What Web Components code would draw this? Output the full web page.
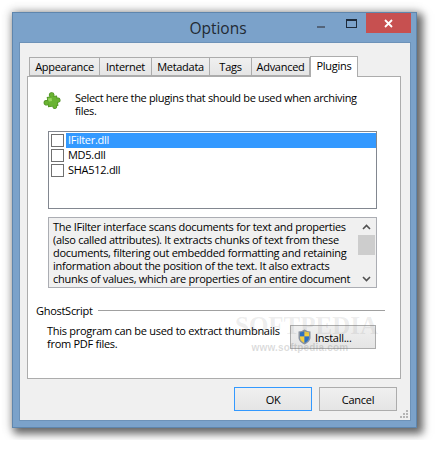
<!DOCTYPE html>
<html><head><meta charset="utf-8">
<style>
html,body{margin:0;padding:0;background:#fff}
body{padding:12px;font:11px "Open Sans","Noto Sans",sans-serif;color:#000;letter-spacing:-.28px}
</style></head><body>
<x-window title="Options">
  <x-tabs>
    <x-tab style="width:70px">Appearance</x-tab><x-tab style="width:52px">Internet</x-tab><x-tab style="width:58px">Metadata</x-tab><x-tab style="width:42px">Tags</x-tab><x-tab style="width:59px">Advanced</x-tab><x-tab active style="width:48px">Plugins</x-tab>
  </x-tabs>
  <x-panel>
    <x-intro>Select here the plugins that should be used when archiving<br>files.</x-intro>
    <x-plugin-list>
      <x-plugin selected>IFilter.dll</x-plugin>
      <x-plugin>MD5.dll</x-plugin>
      <x-plugin>SHA512.dll</x-plugin>
    </x-plugin-list>
    <x-desc>The IFilter interface scans documents for text and properties<br>(also called attributes). It extracts chunks of text from these<br>documents, filtering out embedded formatting and retaining<br>information about the position of the text. It also extracts<br>chunks of values, which are properties of an entire document</x-desc>
    <x-group label="GhostScript">
      <span>This program can be used to extract thumbnails<br>from PDF files.</span>
      <x-button shield>Install...</x-button>
    </x-group>
    <x-mark></x-mark>
  </x-panel>
  <x-footer><x-button big focus>OK</x-button><x-button big>Cancel</x-button></x-footer>
</x-window>
<script>
function def(name,css,html){
  customElements.define(name,class extends HTMLElement{
    constructor(){super();const s=this.attachShadow({mode:'open'});
      s.innerHTML='<style>'+css+'</style>'+(typeof html==='function'?html(this):html);}
  });
}
def('x-window',`
:host{display:block;width:405px;height:416px;box-sizing:border-box;background:#7ba2ca;border:1px solid #5f86ad;
  box-shadow:4px 4px 8px 2px rgba(0,0,0,.55),0 0 9px 2px rgba(0,0,0,.16);display:flex;flex-direction:column}
.bar{height:29px;flex:none;display:flex;position:relative;justify-content:center;align-items:center}
.t{font:15.5px "Open Sans","Noto Sans",sans-serif;color:#222a33;letter-spacing:0;margin:1px 0 0 7px}
.ctl{position:absolute;right:5px;top:0;display:flex;align-items:flex-start}
.min{width:8px;height:2px;background:#53647a;margin:13px 21px 0 0}
.max{width:9px;height:6px;border:1.5px solid #1d2a3a;border-top-width:2.5px;margin:6px 9px 0 0;box-sizing:content-box}
.x{width:45px;height:20px;background:#c75050;display:flex;align-items:center;justify-content:center}
.client{flex:1;margin:0 5px 6px 6px;background:#f0f0f0;border:1px solid #6d92b8;display:flex;flex-direction:column;padding:13px 0 0 7px;box-sizing:border-box;min-height:0;position:relative}
.grip{position:absolute;right:1px;bottom:1px}
`,`<div class="bar"><span class="t">Options</span><div class="ctl"><div class="min"></div><div class="max"></div><div class="x"><svg width="9" height="9" viewBox="0 0 9 9"><path d="M1 1l7 7M8 1L1 8" stroke="#fff" stroke-width="1.8"/></svg></div></div></div>
<div class="client"><slot></slot><svg class="grip" width="9" height="9" viewBox="0 0 9 9" fill="#b5b5b5"><rect x="6" y="0" width="2" height="2"/><rect x="3" y="3" width="2" height="2"/><rect x="6" y="3" width="2" height="2"/><rect x="0" y="6" width="2" height="2"/><rect x="3" y="6" width="2" height="2"/><rect x="6" y="6" width="2" height="2"/></svg></div>`);
def('x-tabs',`:host{display:flex;align-items:flex-end;height:20px;padding-left:2px;position:relative;z-index:1;flex:none;margin-right:10px}`,`<slot></slot>`);
def('x-tab',`
:host{display:block;box-sizing:border-box;height:19px;border:1px solid #acacac;border-right-width:0;background:linear-gradient(#f0f0f0,#e5e5e5);line-height:18px;white-space:nowrap;text-align:center}
:host(:nth-child(5)){border-right-width:1px}
:host([active]){height:21px;background:#fff;border-right-width:1px;border-bottom:0;line-height:18px;margin-bottom:-1px;position:relative}
`,`<slot></slot>`);
def('x-panel',`
:host{display:flex;flex-direction:column;width:374px;height:303px;box-sizing:border-box;background:#fff;border:1px solid #acacac;flex:none;position:relative;padding:0 23px 0 20px}
`,`<slot></slot>`);
def('x-intro',`
:host{display:flex;height:54px;box-sizing:border-box;padding-top:13px;margin-left:-5px;flex:none;line-height:13px}
svg{flex:none;margin:2px 14px 0 0}
div{width:320px;padding-top:1px;white-space:nowrap;letter-spacing:-.34px}
`,`<svg width="18" height="18" viewBox="0 0 18 18"><g transform="rotate(-8 9 9)"><g fill="#4f8f24" stroke="#4f8f24" stroke-width="1.400"><rect x="5" y="5" width="9" height="9"/><circle cx="9.500" cy="3" r="2.100"/><circle cx="3.200" cy="10" r="2.100"/><circle cx="15" cy="9" r="1.900"/><circle cx="11" cy="15" r="1.700"/></g><g fill="#69b332"><rect x="5" y="5" width="9" height="9"/><circle cx="9.500" cy="3" r="2.100"/><circle cx="3.200" cy="10" r="2.100"/><circle cx="15" cy="9" r="1.900"/><circle cx="11" cy="15" r="1.700"/></g><path d="M5 6h4v3H6z" fill="#97d65e"/></g></svg><div><slot></slot></div>`);
def('x-plugin-list',`
:host{display:block;height:78px;box-sizing:border-box;border:1px solid #828790;padding:1px 0 0 2px;flex:none}
`,`<slot></slot>`);
def('x-plugin',`
:host{display:flex;align-items:center;height:15px;gap:2px}
.b{width:11px;height:11px;border:1px solid #707070;background:#fff;flex:none}
.l{flex:1;height:15px;line-height:14px;padding-left:2px}
:host([selected]) .l{background:#3399ff;color:#fff}
`,`<div class="b"></div><div class="l"><slot></slot></div>`);
def('x-desc',`
:host{display:flex;height:71px;box-sizing:border-box;margin-top:8px;border:1px solid #abadb3;background:#f0f0f0;flex:none;overflow:hidden}
.txt{flex:1;padding:2px 3px 0 4px;line-height:13px;overflow:hidden;white-space:nowrap}
.sb{width:17px;flex:none;display:flex;flex-direction:column;background:#f0f0f0;margin-right:1px}
.ar{height:17px;display:flex;align-items:center;justify-content:center}
.tr{flex:1}
.th{height:20px;background:#cdcdcd}
`,`<div class="txt"><slot></slot></div><div class="sb"><div class="ar"><svg width="9" height="6" viewBox="0 0 9 6"><path d="M1 5l3.500-3.500L8 5" fill="none" stroke="#505050" stroke-width="1.600"/></svg></div><div class="tr"><div class="th"></div></div><div class="ar"><svg width="9" height="6" viewBox="0 0 9 6"><path d="M1 1l3.500 3.500L8 1" fill="none" stroke="#505050" stroke-width="1.600"/></svg></div></div>`);
def('x-group',`
:host{display:block;margin:14px -8px 0 -12px;flex:none}
.h{display:flex;align-items:center;gap:5px;height:16px}
.h i{flex:1;height:1px;background:#a0a0a0;display:block}
.c{display:flex;margin-top:6px;padding-left:11px;line-height:13px;position:relative}
.c ::slotted(span){width:243px;flex:none;display:block;white-space:nowrap}
`,el=>`<div class="h"><span>${el.getAttribute('label')}</span><i></i></div><div class="c"><slot></slot></div>`);
def('x-button',`
:host{display:flex;align-items:center;justify-content:flex-start;padding-left:6px;box-sizing:border-box;width:86px;height:24px;border:1px solid #acacac;background:linear-gradient(#f0f0f0,#e5e5e5);gap:3px;white-space:nowrap;flex:none;margin-top:1px}
:host([big]){width:78px;height:24px;margin:0;justify-content:center;padding:0}
:host([focus]){border:1px solid #3399ff}
svg{flex:none}
`,el=>(el.hasAttribute('shield')?`<svg width="15" height="16" viewBox="0 0 15 16"><path d="M7.500.6C5.500 2 3.500 2.400 1.500 2.500v6c0 3.200 2.800 5.600 6 7 3.200-1.400 6-3.800 6-7v-6C11.500 2.400 9.500 2 7.500.6z" fill="#8a93a0"/><path d="M7.500 2C6 3 4.500 3.400 3 3.500v3.900h4.500z" fill="#2a6fc4"/><path d="M7.500 2c1.500 1 3 1.400 4.500 1.500v3.900H7.500z" fill="#f4cf3c"/><path d="M3 7.400h4.500v6.500C5 12.700 3 11 3 8.500z" fill="#f4cf3c"/><path d="M12 7.400H7.500v6.500c2.500-1.200 4.500-2.900 4.500-5.400z" fill="#2a6fc4"/></svg>`:'')+`<slot></slot>`);
def('x-footer',`
:host{display:flex;justify-content:flex-end;gap:7px;margin:8px 13px 0 0;flex:none}
`,`<slot></slot>`);
def('x-mark',`
:host{position:absolute;left:207px;top:237px;width:130px;pointer-events:none;color:rgba(120,120,120,.14);text-align:center;display:block;white-space:nowrap}
.a{font:bold 25px "Liberation Serif",serif;letter-spacing:0;line-height:24px}
.b{font:bold 10px "Liberation Sans",sans-serif;letter-spacing:.2px;margin-top:4px;color:rgba(110,110,110,.25)}
`,`<div class="a">SOFTPEDIA</div><div class="b">www.softpedia.com</div>`);
</script>
</body></html>
